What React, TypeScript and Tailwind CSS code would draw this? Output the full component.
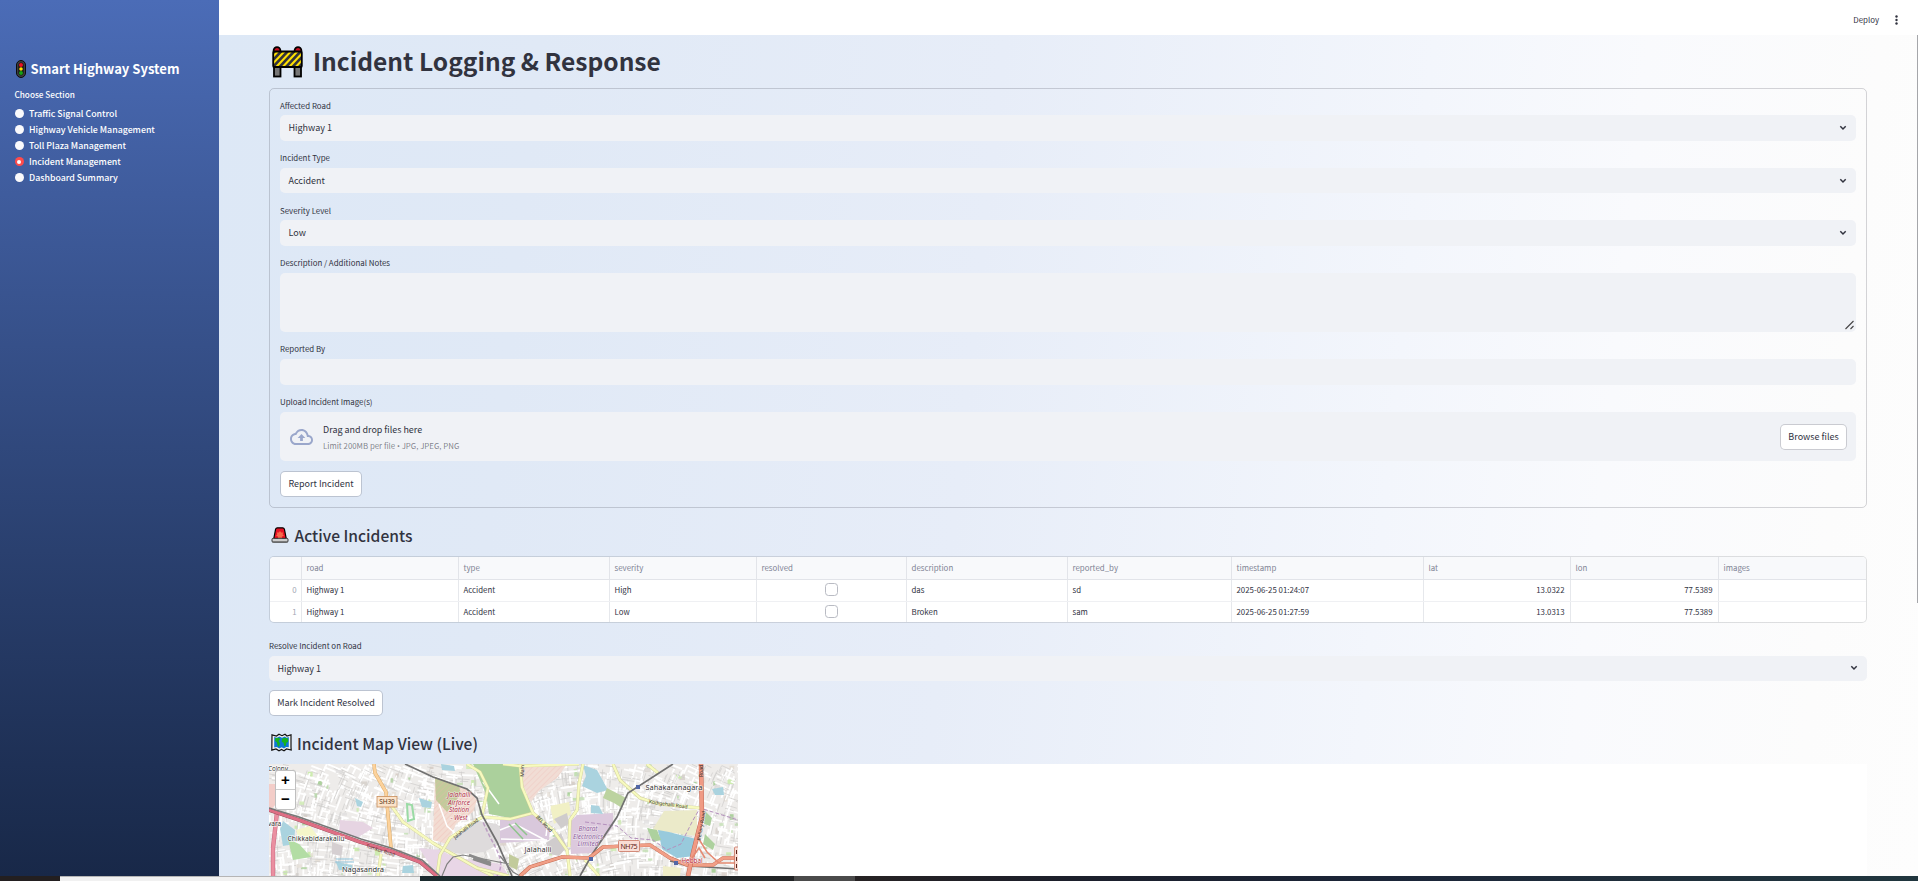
import React from 'react';

const rows = [
  { road: 'Highway 1', type: 'Accident', severity: 'High', description: 'das', by: 'sd', time: '2025-06-25 01:24:07', lat: '13.0322', lon: '77.5389' },
  { road: 'Highway 1', type: 'Accident', severity: 'Low', description: 'Broken', by: 'sam', time: '2025-06-25 01:27:59', lat: '13.0313', lon: '77.5389' },
];

const sections = [
  'Traffic Signal Control',
  'Highway Vehicle Management',
  'Toll Plaza Management',
  'Incident Management',
  'Dashboard Summary',
];

function TrafficLight() {
  return (
    <svg className="mr-[5px] h-[18px] w-[10px] shrink-0" viewBox="0 0 10 18">
      <rect x="0.5" y="0.5" width="9" height="17" rx="4.5" fill="#3d3d3d" stroke="#0c0c0c" />
      <rect x="2.4" y="2.6" width="5.2" height="12.8" rx="2.4" fill="#111" />
      <circle cx="5" cy="5" r="2" fill="#e81224" />
      <circle cx="5" cy="9" r="1.8" fill="#ffe000" />
      <circle cx="5" cy="13" r="2" fill="#16a017" />
    </svg>
  );
}

function Barrier() {
  return (
    <svg className="mr-[10px] h-[32px] w-[31px] shrink-0" viewBox="0 0 31 32">
      <defs>
        <clipPath id="board"><rect x="1.5" y="5.5" width="28" height="15" /></clipPath>
      </defs>
      <rect x="2" y="18" width="6.5" height="12.5" fill="#767676" stroke="#000" strokeWidth="1.8" />
      <rect x="22.5" y="18" width="6.5" height="12.5" fill="#767676" stroke="#000" strokeWidth="1.8" />
      <circle cx="5" cy="4.5" r="3.4" fill="#c50f1f" stroke="#000" strokeWidth="1.8" />
      <circle cx="26" cy="4.5" r="3.4" fill="#c50f1f" stroke="#000" strokeWidth="1.8" />
      <rect x="1.2" y="5.5" width="28.6" height="15.5" fill="#ffe100" />
      <g clipPath="url(#board)" stroke="#33333b" strokeWidth="2.6">
        {[-13, -6.5, 0, 6.5, 13, 19.5, 26].map((x) => (
          <line key={x} x1={x} y1="22" x2={x + 16} y2="5" />
        ))}
      </g>
      <rect x="1.2" y="5.5" width="28.6" height="15.5" rx="1" fill="none" stroke="#000" strokeWidth="1.8" />
    </svg>
  );
}

function Siren() {
  return (
    <svg className="mr-[5.500px] ml-[2px] h-[16px] w-[18px] shrink-0" viewBox="0 0 18 16">
      <path d="M2.8 11.5 4.6 2.2Q5 .8 6.4.8h5.2q1.4 0 1.8 1.4l1.8 9.3z" fill="#e81224" stroke="#000" strokeWidth="1.2" />
      <path d="m9 4 1.2 1.6 2-.2-.6 1.9 1.3 1.5-1.9.7V12H7V9.500l-1.900-.7 1.300-1.500-.6-1.900 2 .2z" fill="#f7684b" />
      <rect x="1" y="11.300" width="16" height="3.900" rx="1.200" fill="#cccccc" stroke="#222" strokeWidth=".9" />
      <path d="M1 14.900h16" stroke="#666" />
    </svg>
  );
}

function MapIcon() {
  return (
    <svg className="mr-[5px] ml-[2px] h-[19px] w-[21px] shrink-0" viewBox="0 0 21 19">
      <path d="M1 1.800 5.500 3 8 1.200l3 1.500 3-1.500L16 3l4-1.200v12.400L20.200 17l-4.700-1-2.500 1.800-2.500-1.300L8 17.800 5 16 .8 17.200z" fill="#f2f2f2" stroke="#111" strokeWidth="1.200" />
      <path d="M3.200 4 6 4.800l2.300-1.300 2.700 1.200 2.800-1.200L15.500 4.800l2.300-.7v10.200l-2.600-.4-2.200 1.600-2.400-1.200-2.300 1.200-2.500-1.500-2.600.6z" fill="#0f78d4" />
      <path d="M4 5.200 8 4.800 9.200 6 7.500 8 9 10 8 14 6.500 12.500 6 9.500 4.200 8zM11.200 5.500l3-.7 3 1-.2 3.200-1.700.8-.3 2.700-1.700.8-.8-3.500-1.800-1z" fill="#16b31d" />
    </svg>
  );
}

function Chevron({ className }: { className: string }) {
  return (
    <svg className={className} viewBox="0 0 8 6">
      <path d="M1.300 1.300 4 4 6.700 1.300" fill="none" stroke="#31333f" strokeWidth="1.500" />
    </svg>
  );
}

function Label({ children }: { children: React.ReactNode }) {
  return <div className="h-[16.500px] text-[7.900px] leading-[14px] text-[#31333f]">{children}</div>;
}

function Select({ value }: { value: string }) {
  return (
    <div className="flex h-[25.600px] items-center justify-between rounded-[5px] bg-[#f0f2f6] pr-[9px] pl-[8.500px] text-[9px] text-[#31333f]">
      <span>{value}</span>
      <Chevron className="h-[6px] w-[8px]" />
    </div>
  );
}

function Button({ children, className = '' }: { children: React.ReactNode; className?: string }) {
  return (
    <button className={`flex h-[26px] shrink-0 items-center justify-center rounded-[5px] border border-[#31333f]/20 bg-white bg-clip-padding text-[9px] whitespace-nowrap text-[#31333f] ${className}`}>
      {children}
    </button>
  );
}

function createRandom(seed: number) {
  let s = seed;
  return () => {
    s = (s * 16807) % 2147483647;
    return s / 2147483647;
  };
}

function buildStreets() {
  const rnd = createRandom(77);
  const items: { d: string; c: string; w: number }[] = [];
  for (let i = 0; i < 2300; i++) {
    const x = rnd() * 469;
    const y = rnd() * 112;
    const tilt = Math.sin(x / 55) * 0.3 + Math.cos(y / 30) * 0.15;
    const a = tilt + (rnd() > 0.5 ? Math.PI / 2 : 0);
    const len = 4 + rnd() * 12;
    const tone = rnd();
    items.push({
      d: `M${x.toFixed(1)} ${y.toFixed(1)}l${(Math.cos(a) * len).toFixed(1)} ${(Math.sin(a) * len).toFixed(1)}`,
      c: tone > 0.42 ? '#ffffff' : '#cfcdcb',
      w: tone > 0.42 ? 1.8 : 0.7,
    });
  }
  return items;
}

function buildPatches() {
  const rnd = createRandom(4242);
  const colors = ['#cdebb0', '#c3e0b4', '#d9d0c9', '#e6e0d8', '#add19e', '#e0dfdf', '#d9d4cf'];
  return Array.from({ length: 210 }, () => ({
    x: rnd() * 466,
    y: rnd() * 110,
    w: 1.5 + rnd() * 5,
    h: 1.5 + rnd() * 4.5,
    c: colors[Math.floor(rnd() * colors.length)],
  }));
}

const streets = buildStreets();
const patches = buildPatches();

function Road({ d, color, casing, width }: { d: string; color: string; casing: string; width: number }) {
  return (
    <g fill="none" strokeLinejoin="round">
      <path d={d} stroke={casing} strokeWidth={width + 0.9} />
      <path d={d} stroke={color} strokeWidth={width} />
    </g>
  );
}

function StreetMap() {
  const yellow = [
    'M119 38 124 44 134 58 164 79 208 104 224 112',
    'M168 112 171 91 181 74 208 56 214 53 241 55 264 49',
    'M198 0 211 8 219 24 213 51',
    'M251 0 253 23 264 49 284 66 298 86 301 112',
    'M314 0 310 20 308 46 301 56 300 83',
    'M344 0 351 16 371 34 390 40 431 44',
    'M378 0 389 9M316 96 330 112M112 90 109 112M234 0 251 2 310 0M208 104 240 112',
  ];
  const salmon = 'M251 112 261 103 293 93 320 94 334 83 381 81 401 94 418 101 444 101 454 94 469 94';
  return (
    <svg className="h-[112px] w-[469px]" viewBox="0 0 469 112" fontFamily="'Noto Sans', sans-serif">
      <defs>
        <pattern id="hatch" width="4" height="4" patternUnits="userSpaceOnUse" patternTransform="rotate(45)">
          <path d="M0 0V4" stroke="#eeb2ac" strokeWidth="1" />
        </pattern>
      </defs>
      <rect width="469" height="112" fill="#eeecea" />
      {patches.slice(0, 120).map((p, i) => (
        <rect key={i} x={p.x} y={p.y} width={p.w} height={p.h} fill={p.c} />
      ))}
      {streets.map((s, i) => (
        <path key={i} d={s.d} stroke={s.c} strokeWidth={s.w} />
      ))}
      {patches.slice(120).map((p, i) => (
        <rect key={i} x={p.x} y={p.y} width={p.w} height={p.h} fill={p.c} opacity=".8" />
      ))}
      <path d="M0 20h6l1 20-7 8z" fill="#f3cdc8" />
      <path d="M14 57 26 66 25 80 14 82 11 65z" fill="#aad3df" />
      <path d="M27 66 41 62 50 74 30 76z" fill="#f5f6c9" />
      <path d="M19 75 30 80 42 93 24 96z" fill="#b3dda4" />
      <path d="M172 0 185 2 186 7 173 6zM86 34 94 38 92 43 88 42zM150 34 163 38 162 44 153 43zM67 98 83 101 84 107 70 106zM134 102 144 101 145 109 133 109z" fill="#aad3df" />
      <path d="M67 95h17M66 98h19" stroke="#8fc4dc" />
      <path d="M138 40 143 41 145 55 139 57z" fill="none" stroke="#9adba5" strokeWidth="2" />
      <path d="M71 56 94 58 104 64 88 74 70 68z" fill="#e6d4e2" />
      <path d="M63 78 74 82 72 92 63 90z" fill="#d5cfd1" />
      <path d="M166 13 198 25 208 36 204 48 187 60 178 80 164 76z" fill="#f2dcd2" />
      <path d="M166 13 190 22 192 30 178 48 167 36z" fill="#c2cb9b" />
      <path d="M166 13 198 25 208 36 204 48 187 60 178 80 164 76z" fill="url(#hatch)" opacity=".6" />
      <path d="M182 74 209 57 228 60 240 75 215 88 192 90 176 86z" fill="#dedbdc" />
      <path d="M150 84 170 86 188 94 232 100 240 112H168z" fill="#e8d6e6" />
      <path d="M204 0H252L253 23 264 49 241 54 220 50 217 30z" fill="#abd09c" />
      <path d="M251 0H298L288 14 270 27 262 38 253 20z" fill="#f1ddd5" />
      <path d="M251 0H298L288 14 270 27 262 38 253 20z" fill="url(#hatch)" opacity=".5" />
      <path d="M231 56 265 50 281 65 280 76 231 79z" fill="#d9c8dc" />
      <path d="M281 42 300 38 302 50 285 60z" fill="#f1f0c5" />
      <path d="M285 55 298 49 300 60 292 64z" fill="#cfcccc" />
      <path d="M277 79 292 69 298 83 290 92 281 90z" fill="#d0cccd" />
      <path d="M308 51 344 49 344 63 324 89 302 90 301 58z" fill="#dcc9dd" />
      <path d="M314 1 328 6 339 26 328 29 313 22 317 12zM322 41 330 42 334 50 322 49z" fill="#aad3df" />
      <path d="M338 24 357 34 353 44 345 39 334 34z" fill="#bcd3a0" />
      <path d="M395 47 428 46 428 72 390 67 384 65z" fill="#ebeac9" />
      <path d="M389 66 400 68 427 75 426 92 408 94 393 85z" fill="#98cadc" />
      <path d="M378 64 388 66 392 76 384 78zM437 48 443 54 441 62 435 60zM436 70 446 80 444 86 434 80z" fill="#add19e" />
      <path d="M443 25 454 23 455 31 446 31z" fill="#aad3df" />
      <path d="M394 102 412 104 411 112H394z" fill="#f0eec9" />
      <path d="M240 90 250 95 248 106 240 102z" fill="#c2cb9b" />
      <path d="M316 58 348 62 362 74 384 76 398 86 412 80 423 58 431 44 469 56" fill="none" stroke="#b490bd" strokeWidth="1" strokeDasharray="4 2" />
      <path d="M228 112C238 96 226 86 214 58" fill="none" stroke="#b490bd" strokeWidth="1.500" strokeDasharray="4 2" opacity=".8" />
      <path d="M231 66 246 60 276 76M281 42 277 72M230 40 214 18M170 40 178 62 187 70M384 12 420 35M232 75 278 76" fill="none" stroke="#fff" strokeWidth="1.500" />
      <path d="M240 60 254 75M246 59 258 71" stroke="#8fc48c" strokeWidth="1.500" />
      {yellow.map((d) => (
        <Road key={d} d={d} color="#f7fabf" casing="#d3d39a" width={2.3} />
      ))}
      <Road d="M105 0 106 9 117 28 119 51 122 84" color="#fcd29c" casing="#dba964" width={2.6} />
      <Road d="M8 48 4 84 4 112" color="#ea8fa0" casing="#c5617c" width={3.4} />
      <Road d="M0 46 30 56 91 78 122 87 151 98 168 112" color="#df6f85" casing="#8e4d58" width={3} />
      <path d="M0 44 30 53 92 75 122 84 153 96 171 112" fill="none" stroke="#777" strokeWidth="1.500" />
      <path d="M136 0 164 13 198 25 208 34 213 51 228 78 243 112M404 0 359 29 348 53 324 89 311 112M401 97 420 102 469 105" fill="none" stroke="#707070" strokeWidth="1.700" />
      <path d="M173 112 178 100 184 93 194 91 240 100M231 92 244 108 251 112" fill="none" stroke="#808080" strokeWidth="1.200" />
      <path d="M200 91 222 99M204 95 222 101" stroke="#8a8a8a" strokeWidth="2.500" />
      <Road d={salmon} color="#f19f87" casing="#c56b52" width={2.8} />
      <Road d="M432 0 433 53 424 89 419 112" color="#f09a84" casing="#bd6350" width={3.6} />
      <path d="M428 72 438 88 450 99 469 99M423 94 430 84 436 94" fill="none" stroke="#e58a72" strokeWidth="1.500" />
      <path d="M320 93h4v4h-4zM367 21h4v4h-4zM405 97h4v4h-4z" fill="#5267a6" />
      <g fontSize="6.600" fontStyle="italic" fill="#b03048" stroke="#fff" strokeWidth="1.200" strokeOpacity=".6" paintOrder="stroke" textAnchor="middle">
        <text x="190" y="33.300" textLength="23">Jalahalli</text>
        <text x="190" y="40.800" textLength="22">Airforce</text>
        <text x="190" y="48.300" textLength="20">Station</text>
        <text x="190" y="55.800" textLength="17">- West</text>
      </g>
      <g fontSize="6.600" fontStyle="italic" fill="#8c5b9a" stroke="#fff" strokeWidth="1" strokeOpacity=".6" paintOrder="stroke" textAnchor="middle">
        <text x="319" y="67" textLength="19">Bharat</text>
        <text x="319" y="74.500" textLength="30">Electronics</text>
        <text x="319" y="82" textLength="21">Limited</text>
      </g>
      <g fill="#333" stroke="#fff" strokeWidth="1.500" strokeOpacity=".75" paintOrder="stroke">
        <text x="-1" y="7" fontSize="6.500" textLength="20">Colony</text>
        <text x="-1" y="62" fontSize="6.500">vara</text>
        <text x="47" y="77" fontSize="6.800" textAnchor="middle" textLength="57">Chikkabidarakallu</text>
        <text x="94" y="107.500" fontSize="7.600" textAnchor="middle" textLength="42">Nagasandra</text>
        <text x="269" y="87.500" fontSize="7.300" textAnchor="middle" textLength="27">Jalahalli</text>
        <text x="405" y="26" fontSize="7.500" textAnchor="middle" textLength="57">Sahakaranagara</text>
      </g>
      <g fontSize="5" fill="#333" textAnchor="middle">
        <text transform="translate(111 88) rotate(18)" fill="#5d1f28" textLength="30">Tumkur Road</text>
        <text transform="translate(198 66) rotate(-38)" textLength="30">Jalahalli Road</text>
        <text transform="translate(399 42) rotate(8)" textLength="39">Kodigehalli Road</text>
        <text transform="translate(274 61) rotate(46)" textLength="21">BEL Road</text>
        <text transform="translate(434 62) rotate(-80)" textLength="30">Bellary Road</text>
        <text transform="translate(434 7) rotate(-90)">Road</text>
        <text transform="translate(255 7) rotate(-88)">Main</text>
      </g>
      <text x="423" y="98.500" fontSize="6.300" fill="#b8232f" textAnchor="middle" stroke="#fff" strokeWidth=".6" paintOrder="stroke">Hebbal</text>
      <rect x="108" y="32.500" width="20" height="10.500" fill="#fbe3c9" stroke="#c98d5a" strokeWidth=".8" />
      <text x="118" y="40.300" fontSize="6.600" fill="#5b3a1c" textAnchor="middle" textLength="15.500">SH39</text>
      <rect x="349.500" y="76.500" width="21" height="11" rx="1" fill="#f9ddd5" stroke="#c9745f" strokeWidth=".8" />
      <text x="360" y="84.700" fontSize="7" fill="#5d2418" textAnchor="middle" textLength="17">NH75</text>
      <rect x="465.500" y="83" width="10" height="23" rx="1" fill="#f9ddd5" stroke="#c9745f" strokeWidth=".8" />
      <path d="M467.500 86v4M467.500 93v4M467.500 100v4" stroke="#5d2418" />
    </svg>
  );
}

function HeadCell({ children }: { children?: React.ReactNode }) {
  return <div className="flex items-center border-b border-l border-[#e2e4e9] bg-[#f8f9fb] pl-[4.500px] text-[7.900px] text-[#808495]">{children}</div>;
}

function Cell({ children, className = '' }: { children?: React.ReactNode; className?: string }) {
  return <div className={`flex items-center border-l border-[#e6e8ec] px-[4.500px] pb-px text-[7.850px] text-[#31333f] ${className}`}>{children}</div>;
}

const columns = 'grid grid-cols-[31px_157px_151px_147px_150px_161px_164px_192px_147px_148px_1fr]';

function IncidentTable() {
  return (
    <div className="mt-[10px] h-[67px] shrink-0 overflow-hidden rounded-[5px] border border-[#31333f]/15 bg-white bg-clip-padding">
      <div className={`${columns} h-[23px]`}>
        <div className="border-b border-[#e2e4e9] bg-[#f8f9fb]" />
        <HeadCell>road</HeadCell>
        <HeadCell>type</HeadCell>
        <HeadCell>severity</HeadCell>
        <HeadCell>resolved</HeadCell>
        <HeadCell>description</HeadCell>
        <HeadCell>reported_by</HeadCell>
        <HeadCell>timestamp</HeadCell>
        <HeadCell>lat</HeadCell>
        <HeadCell>lon</HeadCell>
        <HeadCell>images</HeadCell>
      </div>
      {rows.map((r, i) => (
        <div key={r.time} className={`${columns} h-[22px] border-b border-[#eff0f3]`}>
          <div className="flex items-center justify-end pr-[4.500px] pb-px text-[7.850px] text-[#a3a8b4]">{i}</div>
          <Cell>{r.road}</Cell>
          <Cell>{r.type}</Cell>
          <Cell>{r.severity}</Cell>
          <Cell className="justify-center">
            <span className="mb-px size-[13px] rounded-[3.500px] border border-[#b9bbc3]" />
          </Cell>
          <Cell>{r.description}</Cell>
          <Cell>{r.by}</Cell>
          <Cell>{r.time}</Cell>
          <Cell className="justify-end pr-[5.500px]">{r.lat}</Cell>
          <Cell className="justify-end pr-[5.500px]">{r.lon}</Cell>
          <Cell />
        </div>
      ))}
    </div>
  );
}

export default function App() {
  return (
    <div className="flex h-[881px] w-[1918px] flex-col overflow-hidden font-['Noto_Sans_CJK_SC','Noto_Sans',sans-serif]">
      <div className="flex h-[876px]">
        <aside className="w-[219px] shrink-0 bg-linear-to-b from-[#4b6cb7] to-[#182848] pt-[59.500px] pl-[14.500px] text-white">
          <h1 className="flex h-[18px] items-center text-[13.050px] leading-[18px] font-bold whitespace-nowrap">
            <span className="flex pl-px"><TrafficLight /></span>
            Smart Highway System
          </h1>
          <div className="mt-[9.500px] h-[14.500px] text-[8.200px] leading-[14px] font-medium">Choose Section</div>
          <div className="mt-[4px] flex flex-col">
            {sections.map((s) => (
              <div key={s} className="flex h-[16px] items-center text-[8.800px] font-medium whitespace-nowrap">
                <span className={`mr-[5px] flex size-[9.500px] shrink-0 items-center justify-center rounded-full ${s === 'Incident Management' ? 'bg-[#ff4b4b]' : 'bg-[#fafafc]'}`}>
                  {s === 'Incident Management' && <span className="size-[4px] rounded-full bg-white" />}
                </span>
                {s}
              </div>
            ))}
          </div>
        </aside>

        <div className="flex min-w-0 flex-1 flex-col">
          <header className="flex h-[35px] shrink-0 items-center justify-end bg-white pt-[4px] pr-[19.500px] text-[7.900px] text-[#31333f]">
            <span>Deploy</span>
            <svg className="ml-[14.500px] h-[10px] w-[5px]" viewBox="0 0 5 10" fill="#31333f">
              <circle cx="2.500" cy="1.500" r="1.200" />
              <circle cx="2.500" cy="5" r="1.200" />
              <circle cx="2.500" cy="8.500" r="1.200" />
            </svg>
          </header>
          <div className="flex min-h-0 flex-1 bg-[linear-gradient(96deg,#dde8f6_0%,#e0e9f6_18%,#e7edf8_44%,#f3f6fc_68%,#f9fafd_80%,#fcfcfc_93%,#fdfdfd_100%)]">
            <main className="ml-[50px] flex w-[1598px] shrink-0 flex-col">
              <h1 className="mt-[9px] ml-[3px] flex h-[36px] shrink-0 items-center text-[24.550px] leading-[34px] font-bold whitespace-nowrap text-[#31333f]">
                <Barrier />
                <span className="-mt-[2px]">Incident Logging &amp; Response</span>
              </h1>

              <form className="mt-[8px] flex h-[419.500px] shrink-0 flex-col gap-[10.500px] rounded-[5px] border border-[#31333f]/20 px-[10px] pt-[9.700px]">
                <div><Label>Affected Road</Label><Select value="Highway 1" /></div>
                <div><Label>Incident Type</Label><Select value="Accident" /></div>
                <div><Label>Severity Level</Label><Select value="Low" /></div>
                <div>
                  <Label>Description / Additional Notes</Label>
                  <div className="flex h-[59px] items-end justify-end rounded-[5px] bg-[#f0f2f6] p-[2px]">
                    <svg className="h-[10px] w-[9px]" viewBox="0 0 9 10"><path d="M.5 9 8.500 1M5.500 9 8.500 6" stroke="#444" strokeWidth="1.100" /></svg>
                  </div>
                </div>
                <div>
                  <Label>Reported By</Label>
                  <div className="h-[25.600px] rounded-[5px] bg-[#f0f2f6]" />
                </div>
                <div>
                  <Label>Upload Incident Image(s)</Label>
                  <div className="flex h-[49px] items-center rounded-[5px] bg-[#f0f2f6] pt-[1.500px] pr-[9px] pl-[10px]">
                    <svg className="h-[16px] w-[23px] text-[#9aa7cb]" viewBox="0 4 24 16" preserveAspectRatio="none" fill="currentColor">
                      <path d="M19.350 10.040C18.670 6.590 15.640 4 12 4 9.110 4 6.600 5.640 5.350 8.040 2.340 8.360 0 10.910 0 14c0 3.310 2.690 6 6 6h13c2.760 0 5-2.240 5-5 0-2.640-2.050-4.780-4.650-4.960zM19 18H6c-2.210 0-4-1.790-4-4 0-2.050 1.530-3.760 3.560-3.970l1.070-.11.5-.95C8.080 7.140 9.940 6 12 6c2.620 0 4.880 1.860 5.390 4.430l.3 1.500 1.530.11c1.560.1 2.780 1.410 2.780 2.960 0 1.650-1.350 3-3 3zM8 13h2.550v3h2.900v-3H16l-4-4z" />
                    </svg>
                    <div className="ml-[10px] flex flex-1 flex-col pt-[1.500px]">
                      <span className="text-[8.950px] leading-[16px] text-[#31333f]">Drag and drop files here</span>
                      <span className="text-[7.850px] leading-[15px] text-[#31333f]/60">
                        Limit 200MB per file <span className="font-['Noto_Sans',sans-serif]">•</span> JPG, JPEG, PNG
                      </span>
                    </div>
                    <Button className="w-[67px]">Browse files</Button>
                  </div>
                </div>
                <Button className="-mt-[0.500px] w-[82px]">Report Incident</Button>
              </form>

              <h3 className="mt-[16.500px] flex h-[22px] shrink-0 items-center text-[15.600px] leading-[22px] font-medium text-[#31333f]">
                <Siren />
                Active Incidents
              </h3>
              <IncidentTable />

              <div className="mt-[16px] shrink-0">
                <Label>Resolve Incident on Road</Label>
                <Select value="Highway 1" />
              </div>
              <Button className="mt-[9px] w-[114px]">Mark Incident Resolved</Button>

              <h3 className="mt-[15.500px] flex h-[22px] shrink-0 items-center text-[15.600px] leading-[22px] font-medium text-[#31333f]">
                <MapIcon />
                Incident Map View (Live)
              </h3>
              <div className="relative mt-auto h-[112px] shrink-0 bg-white">
                <StreetMap />
                <div className="absolute top-[6px] left-[6px] flex w-[21px] flex-col rounded-[3px] border border-black/25 bg-white font-['Liberation_Sans',sans-serif] text-[15px] font-bold text-black">
                  <span className="flex h-[19px] items-center justify-center border-b border-[#ccc]">+</span>
                  <span className="flex h-[19px] items-center justify-center">−</span>
                </div>
              </div>
            </main>
            <div className="ml-auto h-[568px] w-px bg-[#a5a6aa]" />
          </div>
        </div>
      </div>

      <footer className="flex h-[5px] bg-[#202427]">
        <div className="w-[60px] bg-[#231f20]" />
        <div className="w-[360px] border-t border-[#b5b5b5] bg-[#f1f1f1]" />
        <div className="w-[374px] bg-linear-to-r from-[#1b2b2e] to-[#222426]" />
        <div className="w-[61px] bg-[#4b4b4b]" />
        <div className="flex-1 bg-[linear-gradient(90deg,#262223_0%,#1c1f2b_20%,#1b2538_50%,#202f3b_75%,#20363e_100%)]" />
      </footer>
    </div>
  );
}
